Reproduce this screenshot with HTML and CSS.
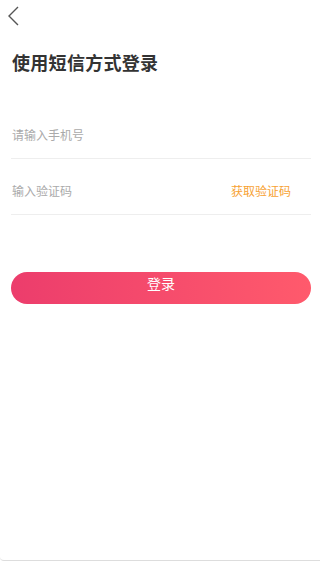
FILE: index.html
```html
<!DOCTYPE html>
<html lang="zh-CN">
<head>
  <meta charset="UTF-8" />
  <meta name="viewport" content="width=device-width, initial-scale=1.0"/>
  <title>短信登录</title>
  <link rel="stylesheet" href="styles.css">
</head>
<body>
  <div class="page">
    <!-- 顶部返回 -->
    <div class="top-bar">
      <svg class="back" width="14" height="22" viewBox="0 0 14 22">
        <polyline points="11,2 2,11 11,20" fill="none" stroke="#555" stroke-width="1.4" />
      </svg>
    </div>

    <h1 class="title">使用短信方式登录</h1>

    <div class="form">
      <div class="field">
        <input type="tel" placeholder="请输入手机号">
      </div>
      <div class="field">
        <input type="text" placeholder="输入验证码">
        <span class="get-code">获取验证码</span>
      </div>
    </div>

    <button class="login-btn">登录</button>
  </div>
</body>
</html>
```

FILE: styles.css
```css
body {
  margin: 0;
  font-family: "Noto Sans CJK SC", "Noto Sans", sans-serif;
  background-color: #fff;
  color: #333;
}

.page {
  height: 561px;
  box-sizing: border-box;
  border-bottom: 1px solid #ddd;
  border-bottom-left-radius: 4px;
  padding: 0 9px 0 11px;
}

.top-bar {
  height: 30px;
  display: flex;
  align-items: center;
}

.back {
  margin-left: -4px;
  margin-top: 1px;
}

.title {
  margin: 17px 0 0 1px;
  font-size: 18px;
  line-height: 30px;
  font-weight: bold;
  color: #333;
  letter-spacing: 0.3px;
}

.form {
  margin-top: 26px;
}

.field {
  height: 56px;
  box-sizing: border-box;
  padding: 7px 0 0 1px;
  border-bottom: 1px solid #eee;
  display: flex;
  align-items: center;
}

.field input {
  flex: 1;
  min-width: 0;
  border: none;
  outline: none;
  padding: 0;
  font-family: inherit;
  font-size: 12px;
  color: #333;
  background: transparent;
}

.field input::placeholder {
  color: #aaa;
}

.get-code {
  font-size: 12px;
  color: #f7a233;
  margin-right: 20px;
}

.login-btn {
  display: block;
  width: 100%;
  height: 32px;
  margin-top: 57px;
  padding: 0 0 10px;
  border: none;
  border-radius: 16px;
  background: linear-gradient(90deg, #ec3d6c, #ff5a6c);
  color: #fff;
  font-family: inherit;
  font-size: 14px;
  cursor: pointer;
}
```
